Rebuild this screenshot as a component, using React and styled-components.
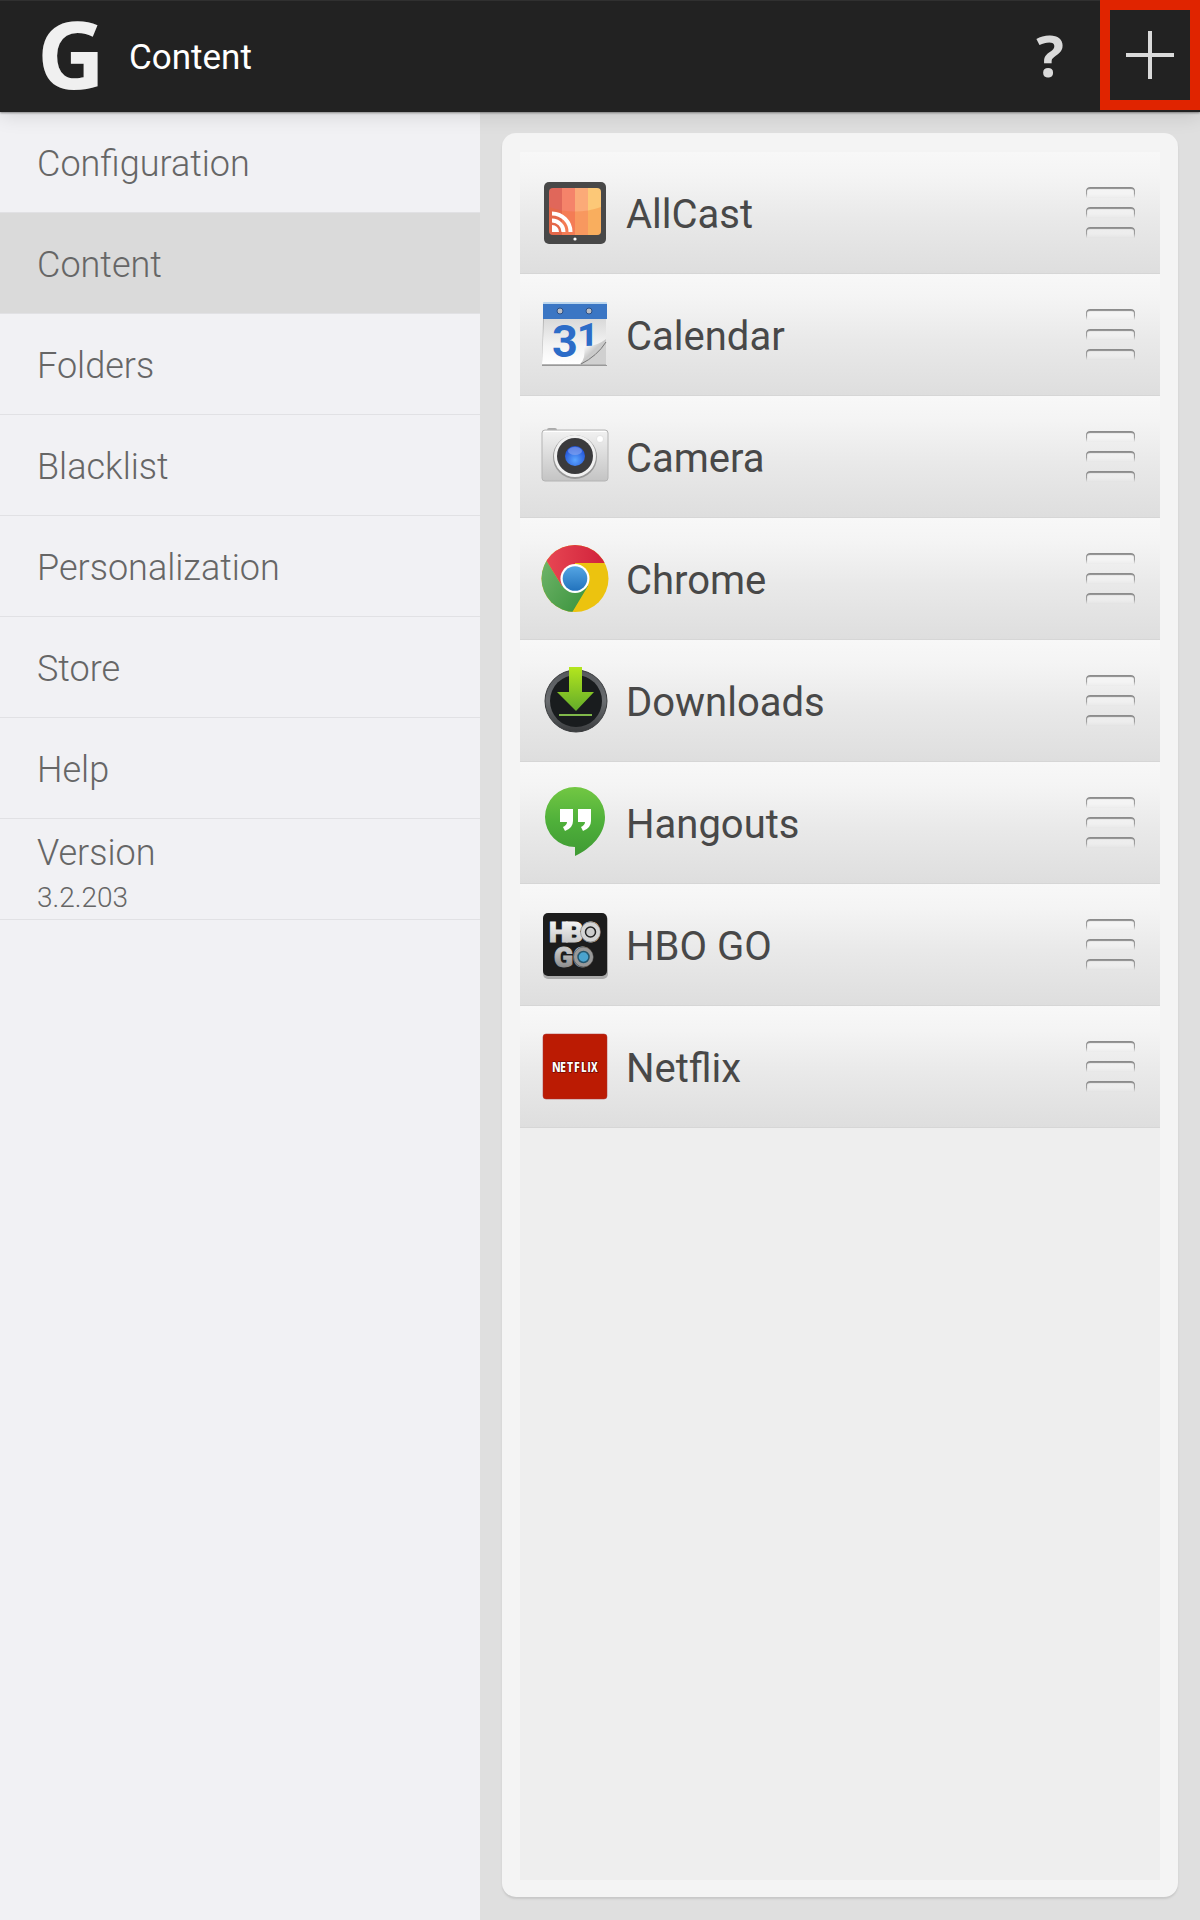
import React from 'react';
import styled, { createGlobalStyle } from 'styled-components';

const GlobalStyle = createGlobalStyle`
	* {
		box-sizing: border-box;
	}
	body {
		margin: 0;
		background-color: #dfdfdf;
		font-family: Roboto, "Liberation Sans", sans-serif;
	}
	button {
		padding: 0;
		border: 0;
		background: none;
		font: inherit;
		cursor: pointer;
	}
`;

const Page = styled.div`
	display: flex;
	flex-direction: column;
	min-height: 100vh;
`;

const Header = styled.header`
	display: flex;
	align-items: center;
	height: 112px;
	padding-left: 37px;
	background-color: #222;
	box-shadow: inset 0 1px #303030, 0 1px 2px rgba(0,0,0,0.4), 0 2px 20px rgba(0,0,0,0.14);
	z-index: 1;
`;

const Logo = styled.span`
	align-self: flex-start;
	width: 92px;
	color: #f0f0f0;
	font: 700 94px/106px "Open Sans", sans-serif;
`;

const Title = styled.h1`
	flex: 1;
	margin: 0;
	padding-top: 4px;
	color: #fff;
	font-size: 35px;
	font-weight: 400;
	line-height: 48px;
`;

const HeaderButton = styled.button`
	display: flex;
	align-items: center;
	justify-content: center;
	align-self: flex-start;
	width: 100px;
	height: 110px;
	color: #dadada;
	font: 700 58px/108px "Open Sans", sans-serif;
	${ (props) => props.$marked && `
		border: 10px solid #e02400;
	`}
`;

const Body = styled.div`
	display: flex;
	flex: 1;
`;

const Sidebar = styled.nav`
	width: 40%;
	background-color: #f1f1f4;
`;

const itemBox = `
	display: flex;
	flex-direction: column;
	justify-content: center;
	height: 101px;
	padding: 4px 37px 0;
	border-bottom: 1px solid #e1e1e4;
	color: #666;
	font-size: 36px;
	font-weight: 300;
	line-height: 46px;
	text-decoration: none;
`;

const MenuLink = styled.a`
	${ itemBox }
	${ (props) => props.$active && `
		background-color: #dadada;
	`}
`;

const VersionBox = styled.div`
	${ itemBox }
	padding-top: 12px;
	small {
		font-size: 28px;
		line-height: 44px;
	}
`;

const Workspace = styled.main`
	display: flex;
	flex: 1;
	padding: 21px 22px 23px;
	background-color: #dfdfdf;
`;

const Panel = styled.section`
	display: flex;
	flex: 1;
	padding: 19px 18px 17px;
	border-radius: 14px;
	background-color: #f4f4f4;
	box-shadow: 0 2px 2px #c8c8c8;
`;

const AppList = styled.ul`
	flex: 1;
	margin: 0;
	padding: 0;
	background-color: #eee;
	list-style: none;
`;

const AppRow = styled.li`
	display: flex;
	align-items: center;
	gap: 16px;
	height: 122px;
	padding: 0 25px 0 20px;
	border-bottom: 1px solid #d6d6d6;
	background-image: linear-gradient(#f8f8f8, #f4f4f4 20%, #e9e9e9 55%, #dedede);
	svg {
		overflow: visible;
	}
`;

const AppName = styled.span`
	flex: 1;
	padding-top: 4px;
	color: #484848;
	font-size: 40px;
	line-height: 48px;
`;

const Grip = styled.button`
	display: flex;
	flex-direction: column;
	gap: 9px;
	width: 49px;
`;

const GripBar = styled.span`
	width: 100%;
	height: 11px;
	border-radius: 4px 4px 0 0;
	background-color: rgba(255,255,255,0.3);
	box-shadow: inset 0 2px 1px #8c8c8c, inset 1px 0 1px #999, inset -1px 0 1px #999;
	mask-image: linear-gradient(#000 60%, transparent);
`;

const Icon = ({ children }) => (
	<svg width="70" height="70" viewBox="0 0 70 70" aria-hidden="true">{ children }</svg>
);

const AllCastIcon = () => (
	<Icon>
		<defs>
			<clipPath id="castScreen"><rect x="9" y="10" width="52" height="47" rx="4" /></clipPath>
		</defs>
		<rect x="4" y="4" width="62" height="62" rx="5" fill="#484848" />
		<g clipPath="url(#castScreen)">
			<rect x="9" y="10" width="13" height="47" fill="#e0675a" />
			<rect x="22" y="10" width="13" height="47" fill="#f5836a" />
			<rect x="35" y="10" width="13" height="47" fill="#fbaa78" />
			<rect x="48" y="10" width="13" height="47" fill="#fcc877" />
			<path d="M9 29 Q35 38 61 29 V57 H9z" fill="#f06a20" opacity="0.28" />
		</g>
		<path d="M12 54V47A7 7 0 0 1 19 54z" fill="#fff" />
		<path d="M12 42.500a11.500 11.500 0 0 1 11.500 11.500M12 35.500a18.500 18.500 0 0 1 18.500 18.500" fill="none" stroke="#fff" strokeWidth="4" />
		<circle cx="35" cy="61" r="1.600" fill="#fff" />
	</Icon>
);

const CalendarIcon = () => (
	<Icon>
		<defs>
			<linearGradient id="calPaper" x1="0" y1="0" x2="0" y2="1">
				<stop offset="0" stopColor="#d9d9d9" />
				<stop offset="0.6" stopColor="#f4f4f4" />
				<stop offset="1" stopColor="#fff" />
			</linearGradient>
			<linearGradient id="calCurl" x1="0" y1="0" x2="1" y2="1">
				<stop offset="0.2" stopColor="#fff" />
				<stop offset="0.5" stopColor="#c9c9c9" />
				<stop offset="1" stopColor="#ddd" />
			</linearGradient>
		</defs>
		<path d="M3 19H66V66H2z" fill="#b5b5b5" />
		<path d="M4 19H66V43L43 64H2z" fill="url(#calPaper)" />
		<text fill="#2c6cc8" fontFamily="Roboto" fontWeight="700">
			<tspan x="12" y="57" fontSize="45">3</tspan>
			<tspan x="37" y="51" fontSize="38">1</tspan>
		</text>
		<path d="M40 64Q46 59 44 46Q56 47 66 39V64z" fill="url(#calCurl)" />
		<path d="M43 64Q58 57 66 44V64z" fill="#d0d0d0" />
		<path d="M41 64Q57 56 66 42" fill="none" stroke="#777" strokeWidth="1" />
		<rect x="3" y="2" width="64" height="3" rx="1" fill="#b9d5ee" />
		<rect x="3" y="4" width="64" height="15" fill="#3b76c4" />
		<g fill="#b9bcc4" stroke="#2a4f86" strokeWidth="1">
			<circle cx="20" cy="11" r="3" />
			<circle cx="49" cy="11" r="3" />
		</g>
		<path d="M2 65.500H67" stroke="#999" />
	</Icon>
);

const CameraIcon = () => (
	<Icon>
		<defs>
			<linearGradient id="camBody" x1="0" y1="0" x2="0" y2="1">
				<stop offset="0" stopColor="#f2f2f2" />
				<stop offset="1" stopColor="#c4c4c4" />
			</linearGradient>
			<radialGradient id="camLens" cx="0.5" cy="0.7" r="0.6">
				<stop offset="0" stopColor="#5ba5ff" />
				<stop offset="1" stopColor="#2456d8" />
			</radialGradient>
		</defs>
		<rect x="7" y="6" width="10" height="4" rx="2" fill="#aaa" />
		<rect x="2" y="8" width="66" height="51" rx="3" fill="url(#camBody)" stroke="#b4b4b4" />
		<path d="M4 9.500H66" stroke="#fff" />
		<circle cx="35" cy="35" r="22" fill="#999" />
		<circle cx="35" cy="34" r="21" fill="#f1f1f1" />
		<circle cx="35" cy="34" r="18" fill="#3a3a3c" />
		<circle cx="35" cy="34" r="10" fill="url(#camLens)" />
		<ellipse cx="35" cy="29" rx="7" ry="4" fill="#8ea6f0" opacity="0.6" />
		<circle cx="60" cy="17" r="3.500" fill="#fff" stroke="#d0d0d0" strokeWidth="0.500" />
	</Icon>
);

const ChromeIcon = () => (
	<Icon>
		<defs>
			<clipPath id="chromeDisc"><circle cx="35" cy="34.500" r="33.500" /></clipPath>
			<linearGradient id="chromeRed" x1="0" y1="0" x2="1" y2="0">
				<stop offset="0" stopColor="#e94a55" />
				<stop offset="1" stopColor="#cf1f39" />
			</linearGradient>
			<linearGradient id="chromeBlue" x1="0" y1="0" x2="0" y2="1">
				<stop offset="0" stopColor="#55a5e3" />
				<stop offset="1" stopColor="#2273bd" />
			</linearGradient>
			<linearGradient id="chromeGreen" x1="0" y1="0" x2="1" y2="1">
				<stop offset="0" stopColor="#76b86e" />
				<stop offset="1" stopColor="#36913a" />
			</linearGradient>
		</defs>
		<g clipPath="url(#chromeDisc)">
			<rect width="70" height="70" fill="#ecc30f" />
			<path d="M0 6L22 42L48 42L30 72H0z" fill="url(#chromeGreen)" />
			<path d="M0 6L22 42L35 35V19H70V0H0z" fill="url(#chromeRed)" />
		</g>
		<circle cx="35" cy="34.500" r="14.500" fill="#fff" />
		<circle cx="35" cy="34.500" r="12.300" fill="url(#chromeBlue)" />
	</Icon>
);

const DownloadsIcon = () => (
	<Icon>
		<defs>
			<linearGradient id="dlRing" x1="0" y1="0" x2="0" y2="1">
				<stop offset="0" stopColor="#55585c" />
				<stop offset="0.5" stopColor="#6a6d70" />
				<stop offset="1" stopColor="#3a3c3e" />
			</linearGradient>
			<linearGradient id="dlArrow" x1="0" y1="0" x2="0" y2="1">
				<stop offset="0" stopColor="#b4e61e" />
				<stop offset="1" stopColor="#62ab2a" />
			</linearGradient>
		</defs>
		<circle cx="36" cy="35" r="31" fill="url(#dlRing)" stroke="#3a3c3e" />
		<circle cx="36" cy="35" r="26" fill="#191c1e" />
		<path d="M29 1H42V26H54L36 45L17 26H29z" fill="url(#dlArrow)" />
		<rect x="19" y="48" width="33" height="2" fill="#80b84a" />
	</Icon>
);

const HangoutsIcon = () => (
	<Icon>
		<defs>
			<linearGradient id="hgBubble" x1="0" y1="0" x2="0" y2="1">
				<stop offset="0" stopColor="#72c743" />
				<stop offset="0.5" stopColor="#4fb03a" />
				<stop offset="1" stopColor="#3f9a34" />
			</linearGradient>
		</defs>
		<path d="M35 -1A30 30 0 0 1 65 29C65 46 52 60 35 68V59A30 30 0 0 1 35 -1z" fill="url(#hgBubble)" />
		<path d="M20 21H33V33Q33 40 25 43L23 39Q27 37 27 34H20zM38 21H51V33Q51 40 43 43L41 39Q45 37 45 34H38z" fill="#fff" />
	</Icon>
);

const HboGoIcon = () => (
	<Icon>
		<defs>
			<linearGradient id="hboSilver" x1="0" y1="0" x2="0" y2="1">
				<stop offset="0" stopColor="#fff" />
				<stop offset="0.45" stopColor="#c9c9c9" />
				<stop offset="0.6" stopColor="#c4c4c4" />
				<stop offset="1" stopColor="#777" />
			</linearGradient>
		</defs>
		<rect x="3" y="5" width="65" height="64" rx="5" fill="#000" opacity="0.25" />
		<rect x="3" y="3" width="64" height="63" rx="5" fill="#1c1c1c" />
		<text fontFamily="Roboto" fontWeight="900" fontSize="28" fill="url(#hboSilver)" stroke="url(#hboSilver)" strokeWidth="1">
			<tspan x="9 25 41" y="32">HBO</tspan>
			<tspan x="14 33" y="57">GO</tspan>
		</text>
		<circle cx="50.500" cy="22" r="10" fill="#d4d4d4" stroke="#555" strokeWidth="0.500" />
		<circle cx="50.500" cy="22" r="5" fill="#ccc" stroke="#222" strokeWidth="1.500" />
		<circle cx="43.500" cy="47" r="10" fill="#999" stroke="#333" strokeWidth="0.500" />
		<circle cx="43.500" cy="47" r="5.500" fill="#4aa3cf" stroke="#24566e" strokeWidth="1.500" />
	</Icon>
);

const NetflixIcon = () => (
	<Icon>
		<rect x="3" y="2" width="64" height="65" rx="3" fill="#bb1b03" stroke="#a33" strokeWidth="0.500" />
		<text
			x="12 20 27 34 41 47 51"
			y="40"
			fill="#fff"
			stroke="#500"
			strokeWidth="1"
			paintOrder="stroke"
			fontFamily="'Open Sans Condensed', Roboto"
			fontWeight="700"
			fontSize="14"
		>
			NETFLIX
		</text>
	</Icon>
);

const PlusIcon = () => (
	<svg width="48" height="48" viewBox="0 0 48 48" aria-hidden="true">
		<path d="M24 0V48M0 24H48" stroke="#dadada" strokeWidth="4" />
	</svg>
);

const menu = ['Configuration', 'Content', 'Folders', 'Blacklist', 'Personalization', 'Store', 'Help'];

const apps = [
	{ name: 'AllCast', AppIcon: AllCastIcon },
	{ name: 'Calendar', AppIcon: CalendarIcon },
	{ name: 'Camera', AppIcon: CameraIcon },
	{ name: 'Chrome', AppIcon: ChromeIcon },
	{ name: 'Downloads', AppIcon: DownloadsIcon },
	{ name: 'Hangouts', AppIcon: HangoutsIcon },
	{ name: 'HBO GO', AppIcon: HboGoIcon },
	{ name: 'Netflix', AppIcon: NetflixIcon }
];

export default function App() {
	return (
		<Page>
			<GlobalStyle />
			<Header>
				<Logo>G</Logo>
				<Title>Content</Title>
				<HeaderButton type="button" aria-label="Help">?</HeaderButton>
				<HeaderButton type="button" aria-label="Add content" $marked>
					<PlusIcon />
				</HeaderButton>
			</Header>
			<Body>
				<Sidebar>
					{ menu.map((label) => (
						<MenuLink key={label} href={`#${ label.toLowerCase() }`} $active={label === 'Content'}>
							{ label }
						</MenuLink>
					)) }
					<VersionBox>
						Version
						<small>3.2.203</small>
					</VersionBox>
				</Sidebar>
				<Workspace>
					<Panel>
						<AppList>
							{ apps.map(({ name, AppIcon }) => (
								<AppRow key={name}>
									<AppIcon />
									<AppName>{ name }</AppName>
									<Grip type="button" aria-label={`Move ${ name }`}>
										<GripBar />
										<GripBar />
										<GripBar />
									</Grip>
								</AppRow>
							)) }
						</AppList>
					</Panel>
				</Workspace>
			</Body>
		</Page>
	);
};
